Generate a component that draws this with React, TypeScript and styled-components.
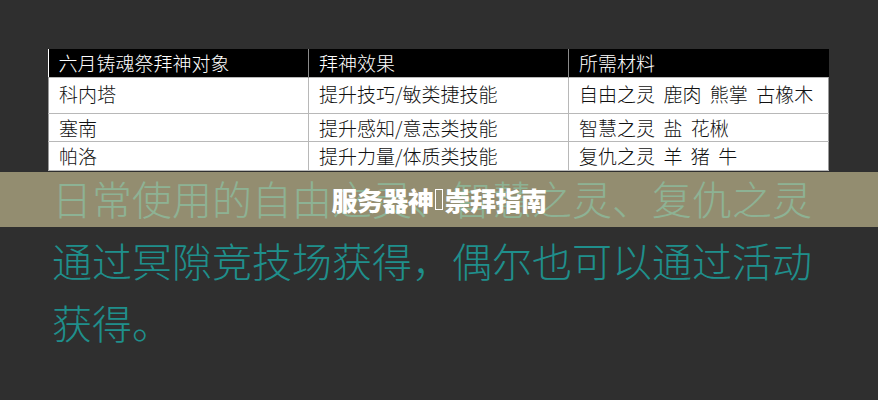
import styled, { createGlobalStyle } from 'styled-components'

const GlobalStyle = createGlobalStyle`
  html, body {
    margin: 0;
    padding: 0;
    background: #2f2f2f;
  }
  body {
    font-family: "Noto Sans CJK SC", "Noto Sans", sans-serif;
  }
`

const Page = styled.div`
  position: relative;
  width: 878px;
  height: 400px;
  overflow: hidden;
  background: #2f2f2f;
  padding: 49px 0 0 48px;
  box-sizing: border-box;
`

const Table = styled.table`
  width: 781px;
  border-collapse: collapse;
  table-layout: fixed;
  background: #ffffff;
  font-size: 19px;
  font-weight: 300;
  line-height: 1;
`

const HeadCell = styled.th`
  background: #000000;
  color: #ffffff;
  font-weight: 300;
  text-align: left;
  height: 28px;
  padding: 0 0 0 10px;
  border-left: 1px solid #8a8a8a;
  box-sizing: border-box;
  &:first-child {
    border-left: none;
  }
`

const Cell = styled.td<{ $h: number }>`
  color: #111111;
  height: ${(p) => p.$h}px;
  padding: 0 0 ${(p) => (p.$h > 30 ? 4 : 0)}px 10px;
  border: 1.5px solid #b8b8b8;
  white-space: pre;
  box-sizing: border-box;
  &:first-child {
    border-left: 1px solid #9a9a9a;
  }
  &:last-child {
    border-right: 1px solid #9a9a9a;
  }
`

const Notes = styled.p`
  margin: -4px 0 0 4px;
  width: 790px;
  color: #1f8f8c;
  font-size: 40px;
  font-weight: 300;
  line-height: 62px;
`

const Band = styled.div`
  position: absolute;
  left: 0;
  right: 0;
  top: 172px;
  height: 55px;
  background: rgba(210, 200, 154, 0.62);
  display: flex;
  align-items: center;
  justify-content: center;
`

const Title = styled.h1`
  margin: 0;
  color: #ffffff;
  font-size: 26px;
  font-weight: 900;
  letter-spacing: -0.5px;
  display: flex;
  align-items: center;
`

const Tofu = styled.span`
  display: inline-block;
  width: 6px;
  height: 19px;
  border: 1px solid #ffffff;
  margin: 0 2px 0 1px;
`

const rows: { h: number; cells: string[] }[] = [
  { h: 36, cells: ['科内塔', '提升技巧/敏类捷技能', '自由之灵  鹿肉  熊掌  古橡木'] },
  { h: 28, cells: ['塞南', '提升感知/意志类技能', '智慧之灵  盐  花楸'] },
  { h: 29, cells: ['帕洛', '提升力量/体质类技能', '复仇之灵  羊  猪  牛'] },
]

export default function App() {
  return (
    <>
      <GlobalStyle />
      <Page>
        <Table>
          <thead>
            <tr>
              <HeadCell>六月铸魂祭拜神对象</HeadCell>
              <HeadCell>拜神效果</HeadCell>
              <HeadCell>所需材料</HeadCell>
            </tr>
          </thead>
          <tbody>
            {rows.map((row) => (
              <tr key={row.cells[0]}>
                {row.cells.map((c) => (
                  <Cell key={c} $h={row.h}>
                    {c}
                  </Cell>
                ))}
              </tr>
            ))}
          </tbody>
        </Table>
        <Notes>
          日常使用的自由之灵、智慧之灵、复仇之灵通过冥隙竞技场获得，偶尔也可以通过活动获得。
        </Notes>
        <Band>
          <Title>
            服务器神<Tofu />崇拜指南
          </Title>
        </Band>
      </Page>
    </>
  )
}
